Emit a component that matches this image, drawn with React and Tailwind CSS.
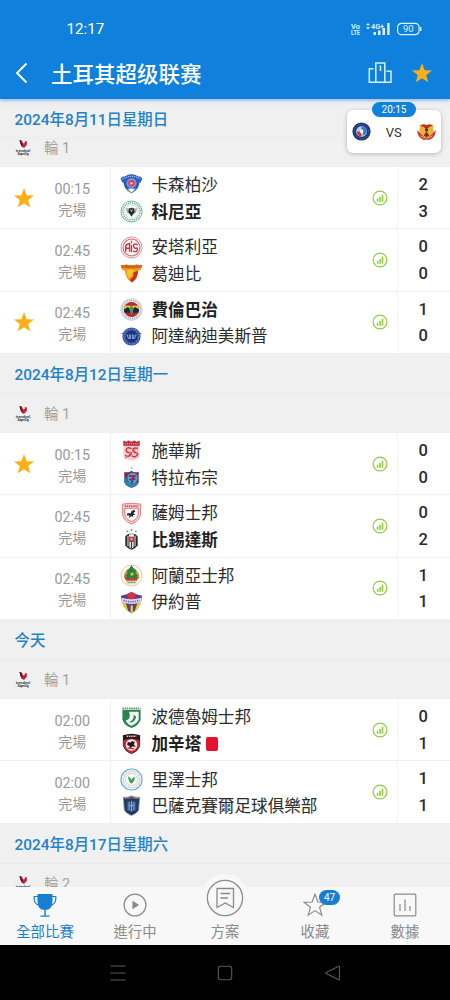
const STAR = "M12 1.200L14.900 9L23 9.300L16.600 14.300L18.800 22.200L12 17.600L5.200 22.200L7.400 14.300L1 9.300L9.100 9Z";

const crests = {
  kasimpasa: (
    <>
      <path d="M.600 6Q2 3.500 5.500 3.500Q8 1.200 12 1.200T18.500 3.500Q22 3.500 23.400 6L21.500 10H2.500Z" fill="#2b62c0" />
      <path d="M2.500 6.500Q12 .5 21.500 6.500" fill="none" stroke="#9db9ea" strokeWidth="1.100" strokeDasharray="1.300 .8" />
      <path d="M3.500 9H20.500Q20 15 16 18.500L12 21L8 18.500Q4 15 3.500 9" fill="#2a5bb8" />
      <circle cx="12" cy="10.800" r="5.200" fill="#7f98dc" />
      <circle cx="12" cy="10.800" r="3.400" fill="#d8435c" />
      <path d="M11 9.300l2.800 1.500-2.800 1.500z" fill="#fff" />
      <path d="M7.500 16.500Q12 15 16.500 16.500L12 21Z" fill="#f4f7ff" stroke="#3c6ac2" strokeWidth=".8" />
    </>
  ),
  konya: (
    <>
      <circle cx="12" cy="12" r="11" fill="#f4faf6" stroke="#6db492" strokeWidth="1" />
      <circle cx="12" cy="12" r="8.900" fill="none" stroke="#5fa684" strokeWidth="1.600" strokeDasharray="1 1" />
      <circle cx="12" cy="12" r="7" fill="#fff" stroke="#a4cdb8" strokeWidth=".5" />
      <path d="M6 8.500l4 .3L12 7.500l2 1.300 4-.3-1.500 5-2.500 1L12 18l-2-3.500-2.500-1z" fill="#a4aaa7" />
      <path d="M9.500 8.500h5l.8 4L12 17l-3.300-4.500z" fill="#222926" />
      <path d="M10.800 10l1.200 2 1.200-2" fill="none" stroke="#eee" strokeWidth=".9" />
    </>
  ),
  antalya: (
    <>
      <circle cx="12" cy="12" r="11" fill="#fff3f3" stroke="#dc9096" strokeWidth="1" />
      <circle cx="12" cy="12" r="8.800" fill="#fff" stroke="#d65a64" strokeWidth="1.100" />
      <path d="M6 16.500V10.500Q6.500 8 10 8V16.500M6 12.800H10" fill="none" stroke="#c73845" strokeWidth="1.600" />
      <path d="M18.500 9.500Q17.500 8 15.500 8.300T14.300 11T17 12.700T17.500 15.800Q15.500 17 13.800 15.300M12 5v2.500M12 9.500v7.500" fill="none" stroke="#c73845" strokeWidth="1.500" />
    </>
  ),
  goztepe: (
    <>
      <path d="M.800 3Q4 4 6.500 2.500Q12 5 17.500 2.500Q20 4 23.200 3L22 8L19 9Q18.500 17 12.500 21.500Q5.500 17 5 9L2 8Z" fill="#f09c1c" />
      <path d="M.800 3Q4 4 6.500 2.500Q12 4.500 17.500 2.500Q20 4 23.200 3L22.500 6Q12 7.500 1.500 6Z" fill="#d9601c" />
      <path d="M19 9Q18.500 17 12.500 21.500L10 18.500Q15 16 14 11Z" fill="#cb2f20" />
      <path d="M7 8.500l5-1 3 2-3 3 1 2-4 2Q6.500 13 7 8.500" fill="#f9c42a" />
    </>
  ),
  fener: (
    <>
      <circle cx="12" cy="12" r="11.300" fill="#e2e6e6" stroke="#b4bdbf" strokeWidth=".6" />
      <circle cx="12" cy="12" r="9.500" fill="none" stroke="#a4acad" strokeWidth="1.300" strokeDasharray="1 1.200" />
      <circle cx="12" cy="12" r="7.900" fill="#b7282f" />
      <path d="M4.800 8.500H19.200Q20.500 12 19.200 15.500H4.800Q3.500 12 4.800 8.500" fill="#1b2553" />
      <path d="M4.800 8H19.200L19.800 12H4.200Z" fill="#ecd42f" />
      <path d="M4.200 12L8 9.500L12 12L16 9.500L19.800 12V13.500H4.200Z" fill="#1b2553" />
      <path d="M12 7.500l2.300 3-1 5-1.300 2-1.300-2-1-5z" fill="#4d9a45" />
    </>
  ),
  adana: (
    <>
      <path d="M.500 8.500l5.500-1V11zM23.500 8.500l-5.500-1V11z" fill="#6f86c8" />
      <circle cx="12" cy="12" r="9.500" fill="#304d9c" />
      <circle cx="12" cy="12" r="7.800" fill="none" stroke="#93a7dc" strokeWidth="1.100" strokeDasharray="1 1" />
      <circle cx="12" cy="12" r="6" fill="#1b3477" />
      <path d="M6.500 10H17.500L15.500 14.500H8.500Z" fill="#7a92d8" />
      <path d="M9 9v4M12 8v8M15 9v4" stroke="#223c84" strokeWidth="1" />
    </>
  ),
  sivas: (
    <>
      <path d="M3.500 1.500l3 1 2.500-1 3 1 3-1 2.500 1 3-1V19Q18 21.500 12 22.500Q6 21.500 3.500 19Z" fill="#f4cdd2" />
      <path d="M3.500 1.500l3 1.500 2.500-1.500 3 1.500 3-1.500 2.500 1.500 3-1.500V7h-17Z" fill="#bd2737" />
      <path d="M5 5h14" stroke="#f2bcc2" strokeWidth="1.200" strokeDasharray="1.200 1" />
      <path d="M12 10Q7 8 6.500 11T10 14.500T9 18Q7 18.500 5.500 17M18.500 10Q13.500 8.500 13.500 11T17 14.500T16 18.500Q14 19 12.500 17.500" fill="none" stroke="#cf2e40" strokeWidth="1.500" />
      <path d="M5 20.500L19 8" stroke="#d8626f" strokeWidth="1" />
    </>
  ),
  trabzon: (
    <>
      <circle cx="12" cy="1.800" r="1" fill="#f0a078" />
      <path d="M4.500 6Q9 7.500 12 5Q15 7.500 19.500 6V17Q18.500 21 12 22.800Q5.500 21 4.500 17Z" fill="#86284f" />
      <path d="M4.500 9v8Q5.500 21 12 22.800Q17.500 21.500 19 18L14 15.500L8.500 17Z" fill="#2585b7" />
      <circle cx="13" cy="12.500" r="5.400" fill="#49a6cd" />
      <path d="M9.500 10.500h7M13.500 10.500Q14 15 12 18M10 13.500Q12 15.500 16 13" fill="none" stroke="#8b244c" strokeWidth="1.800" />
    </>
  ),
  samsun: (
    <>
      <path d="M2.500 2.200Q12 .5 21.500 2.200V13Q20 20 12 23Q4 20 2.500 13Z" fill="#f5cfcf" stroke="#d97b80" strokeWidth="1" />
      <path d="M5 6.500H19V13Q18 18 12 20.500Q6 18 5 13Z" fill="#fff" stroke="#d76268" strokeWidth=".9" />
      <path d="M5 4.200h14" stroke="#cf4f56" strokeWidth="1.800" strokeDasharray="1.400 .8" />
      <path d="M8 11.500l3 .5 1-2.500 3-1.500 1 2-2 1.500 2 2-2.500 0 .5 2.500-2-1.500-3 2.500 1-3-3 0z" fill="#26272a" />
    </>
  ),
  besiktas: (
    <>
      <path d="M7.500 3.500h.1M12 2h.1M16.500 3.500h.1" stroke="#444" strokeWidth="1.500" strokeLinecap="round" />
      <path d="M5.500 9Q7 6 10 6h4Q17 6 18.500 9V18Q16.500 21.500 12 22.800Q7.500 21.500 5.500 18Z" fill="#2a2a2d" />
      <path d="M8.300 8v11M15.700 8v11" stroke="#f1f1f1" strokeWidth="1" />
      <path d="M9.500 6.500h5v3h-5z" fill="#f2f2f2" />
      <path d="M9.500 9h5v5.500h-5z" fill="#d03c49" />
      <path d="M9.800 14.500h4.400v5.500L12 21.500 9.800 20z" fill="#f2f2f2" />
      <path d="M12 14.500v6.500" stroke="#333" strokeWidth="1.200" />
      <path d="M10.800 11.500h2.400" stroke="#fff" />
    </>
  ),
  alanya: (
    <>
      <circle cx="12" cy="12" r="10.900" fill="#fffaf0" stroke="#e2c8a4" strokeWidth="1" />
      <path d="M4 14Q3 7 12 3.500Q21 7 20 14L17 18H7Z" fill="#c99a52" />
      <path d="M12 1l2.500 4 2.500 2-1 2 2.500 3-2.500 3H8l-2.500-3L8 9 7 7l2.500-2z" fill="#2c8144" />
      <circle cx="12.500" cy="10.500" r="1.700" fill="#e1c63c" />
      <path d="M4.500 13l7.500 2.500 7.500-2.500-2 4.500h-11z" fill="#ad4a2c" />
      <path d="M6 17.500h12l-1 3.500H7z" fill="#eadfc0" />
      <path d="M8 19.200h8" stroke="#6b6a48" strokeWidth="1.100" strokeDasharray="1 .7" />
    </>
  ),
  eyup: (
    <>
      <path d="M1 5L7 3.500L12 1l5 2.500L23 5Q23 17 12 23.500Q1 17 1 5" fill="#5c3e8e" />
      <path d="M7 3.500L12 1l5 2.500L15 8H9z" fill="#d6333e" />
      <path d="M2 12l4 1 3 9-3-2.500Q3 16 2 12M22 12l-4 1-3 9 3-2.500Q21 16 22 12M11 15h2.500v8L12 23.500 11 23z" fill="#e7ce34" />
      <path d="M1.500 7Q12 10 22.500 7V12Q12 15 1.500 12Z" fill="#d9d5e5" />
      <path d="M3.500 9.800Q12 12.600 20.500 9.800" fill="none" stroke="#7a66a8" strokeWidth="1.600" strokeDasharray="1.400 1" />
    </>
  ),
  bodrum: (
    <>
      <path d="M2.500 4H21.500V14Q20 20 12 23Q4 20 2.500 14Z" fill="#2f8150" />
      <path d="M2.500 2.500h19" stroke="#4f9a6b" strokeWidth="1.700" strokeDasharray="1.500 .8" />
      <path d="M9.500 6H19.500v8Q18 18 12 20.500Q7 18.500 6 15Q12 14 9.500 6" fill="#f1f8f3" />
      <path d="M14 9Q15.500 14 9.500 17Q15 18.500 17 11Q16 10.500 14 9" fill="#2f8150" />
    </>
  ),
  gaziantep: (
    <>
      <path d="M3 3.500Q12 0 21 3.500V14Q19.500 20 12 23Q4.500 20 3 14Z" fill="#1f1a1d" />
      <path d="M7 4.500h10" stroke="#e7dada" strokeWidth="1.500" strokeDasharray="1.500 .8" />
      <path d="M3.500 8.500Q12 5 20.500 8.500V14Q19 19 12 22.500Q5 19 3.500 14Z" fill="#c42b3a" />
      <circle cx="12" cy="13.500" r="6" fill="#fae9e9" />
      <path d="M8 10.500l3 .5 1.500-1.500 3 1-1 2.500 2 2.500-3.500-.5-3 2.500 0-3-2.500-1z" fill="#28191c" />
      <path d="M8 16.500l7 1" stroke="#c42b3a" strokeWidth="1.300" />
    </>
  ),
  rize: (
    <>
      <circle cx="12" cy="12" r="11" fill="#eff7fa" stroke="#6fa9cc" strokeWidth="1.200" />
      <circle cx="12" cy="12" r="8.500" fill="none" stroke="#b9c8ce" strokeWidth="1.400" strokeDasharray="1 1" />
      <circle cx="12" cy="12" r="6.200" fill="#fff" stroke="#d5a9a9" strokeWidth=".6" />
      <path d="M12 16.500Q8.500 14 8.500 8.500Q11.500 10 12 12.500Q12.500 10 15.500 9Q15.500 14 12 16.500" fill="#36a357" />
    </>
  ),
  basaksehir: (
    <>
      <path d="M3.500 3.500Q8 4 12 2Q16 4 20.500 3.500L19.500 17Q17 21 12 22.500Q7 21 4.500 17Z" fill="#223a60" stroke="#8a98ae" strokeWidth=".8" />
      <path d="M5 4.800Q12 3 19 4.800" fill="none" stroke="#a8786c" strokeWidth="1" />
      <path d="M7 8h10v9l-5 3-5-3z" fill="#2f5789" />
      <path d="M9.500 8v9M12 7v11M14.500 8v9M9.500 12h5" stroke="#8fadd0" strokeWidth="1" />
      <path d="M8 18l4 2.300 4-2.300" fill="none" stroke="#16315a" strokeWidth="1.500" />
    </>
  ),
  jdt: (
    <>
      <circle cx="12" cy="12" r="11.500" fill="#1c3470" />
      <circle cx="12" cy="12" r="9" fill="none" stroke="#4a6cb0" strokeWidth="1.300" strokeDasharray="1.500 1.500" />
      <circle cx="12" cy="12" r="6.800" fill="#b8cdec" />
      <path d="M6 12h6v6.500Q7 18 6 12" fill="#c93546" />
      <path d="M12 5.500Q18.500 7 18.500 12.500L15 17.500L12 13Z" fill="#3874c4" />
      <path d="M10.500 9l4 1-1 5-3-1z" fill="#fff" />
    </>
  ),
  selangor: (
    <>
      <path d="M3.500 4Q8 2 12 3.500Q16 2 20.500 4L21 13L12 21L3 13Z" fill="#e8b33b" />
      <path d="M4 4.500Q8 2 12 4Q16 2 20 4.500L16 6L12 9L8 6Z" fill="#b92f27" />
      <path d="M.500 10Q0 19 8 22.500H16Q24 19 23.500 10L19.500 14.500L15 18.500H9L4.500 14.500Z" fill="#c53a2a" />
      <circle cx="12" cy="10" r="2" fill="#5f2420" />
      <path d="M8.500 17l3.500-5 3.500 5-3.500 2z" fill="#8d241d" />
      <path d="M4.500 17.500Q12 23 19.500 17.500" fill="none" stroke="#f0bf5b" strokeWidth="1.200" />
    </>
  ),
};

const days = [
  {
    date: "2024年8月12日星期一",
    round: "輪 1",
    matches: [
      { time: "00:15", star: true, home: ["sivas", "施華斯", 0], away: ["trabzon", "特拉布宗", 0] },
      { time: "02:45", home: ["samsun", "薩姆士邦", 0], away: ["besiktas", "比錫達斯", 2], winner: "away" },
      { time: "02:45", home: ["alanya", "阿蘭亞士邦", 1], away: ["eyup", "伊約普", 1] },
    ],
  },
  {
    date: "今天",
    round: "輪 1",
    matches: [
      { time: "02:00", home: ["bodrum", "波德魯姆士邦", 0], away: ["gaziantep", "加辛塔", 1], winner: "away", redCard: true },
      { time: "02:00", home: ["rize", "里澤士邦", 1], away: ["basaksehir", "巴薩克賽爾足球俱樂部", 1] },
    ],
  },
  { date: "2024年8月17日星期六", round: "輪 2", matches: [] },
];

const firstDay = [
  { time: "00:15", star: true, home: ["kasimpasa", "卡森柏沙", 2], away: ["konya", "科尼亞", 3], winner: "away" },
  { time: "02:45", home: ["antalya", "安塔利亞", 0], away: ["goztepe", "葛迪比", 0] },
  { time: "02:45", star: true, home: ["fener", "費倫巴治", 1], away: ["adana", "阿達納迪美斯普", 0], winner: "home" },
];

function Crest({ name, className = "size-[23px]" }) {
  return (
    <svg viewBox="0 0 24 24" className={`shrink-0 ${className}`}>
      {crests[name]}
    </svg>
  );
}

function Star({ className }) {
  return (
    <svg viewBox="0 0 24 24" className={className}>
      <path d={STAR} fill="#fdaf17" />
    </svg>
  );
}

function LeagueLogo() {
  return (
    <svg viewBox="0 0 16 18" className="h-[18px] w-4 shrink-0">
      <path d="M4.500 1l2.500.8 1.200 2.700L10 3.500l-.3-1.500L12 2.500 11.800 6 9 9 6.500 7.500z" fill="#c5283e" />
      <path d="M4.500 1l2.300.8-.6 1.500 1.300 2.500L7.500 8 5.500 5z" fill="#2b1b22" />
      <text x="8" y="13.300" textAnchor="middle" textLength="14.500" lengthAdjust="spacingAndGlyphs" fontSize="4" fontWeight="700" fill="#444">trendyol</text>
      <text x="8" y="16.300" textAnchor="middle" textLength="11" lengthAdjust="spacingAndGlyphs" fontSize="3.500" fontWeight="700" fill="#222">SüperLig</text>
    </svg>
  );
}

function DateText({ children }) {
  return <span className="pt-[3.500px] text-[15.4px] font-medium text-[#2381cb]">{children}</span>;
}

function Round({ children }) {
  return (
    <>
      <LeagueLogo />
      <span className="ml-[13px] pt-[3px] text-[14.5px] text-[#a3a3a3]">{children}</span>
    </>
  );
}

function Team({ team, bold, redCard }) {
  const [crest, name] = team;
  return (
    <div className="flex h-[26.7px] items-center">
      <Crest name={crest} />
      <span className={`ml-[9px] pt-[3px] text-[16.6px] whitespace-nowrap ${bold ? "font-bold text-[#222]" : "text-[#2c2c2c]"}`}>
        {name}
      </span>
      {redCard && <span className="ml-[5px] h-[14px] w-3 rounded-[2px] bg-[#e4122f]" />}
    </div>
  );
}

function Match({ match }) {
  const { time, star, home, away, winner, redCard } = match;
  return (
    <div className="flex h-[62.3px] border-b border-[#f0f0f0] bg-white">
      <div className="flex w-[48px] items-center justify-center">
        {star && <Star className="size-[22px]" />}
      </div>
      <div className="flex w-[62.500px] flex-col items-center border-r border-[#f1f1f1] pt-[11.500px] pr-[13px] text-[#9a9a9a]">
        <span className="h-[21px] text-[14.3px] leading-[21px]">{time}</span>
        <span className="h-[21px] text-[14px] leading-[21px]">完場</span>
      </div>
      <div className="flex flex-1 flex-col pt-[4.500px] pl-[9px]">
        <Team team={home} bold={winner === "home"} />
        <Team team={away} bold={winner === "away"} redCard={redCard} />
      </div>
      <div className="flex w-[25.500px] items-center border-r border-[#f4f4f4]">
        <svg viewBox="0 0 16 16" className="-ml-px size-4" fill="none" stroke="#8dcb3f">
          <circle cx="8" cy="8" r="6.900" strokeWidth="1.200" />
          <path d="M5.600 8.800v3M8.100 7v4.800M10.500 4.800v7" strokeWidth="1.600" />
        </svg>
      </div>
      <div className="flex w-[52px] flex-col items-center pt-[4px] pr-[1.500px] text-[16.5px] font-medium text-[#2a2a2a]">
        <span className="h-[26.7px] leading-[27px]">{home[2]}</span>
        <span className="h-[26.7px] leading-[27px]">{away[2]}</span>
      </div>
    </div>
  );
}

function StatusBar() {
  return (
    <div className="flex h-[58px] items-center pl-[66.500px] text-white">
      <span className="w-[283.500px] pt-px text-[15.2px] leading-none">12:17</span>
      <svg viewBox="0 0 72 16" className="h-4 w-[72px]" fill="#d9f2ff">
        <text x="1" y="7.600" fontSize="8" fontWeight="700" textLength="9" lengthAdjust="spacingAndGlyphs">Vo</text>
        <text x="1" y="14" fontSize="7.500" fontWeight="700" textLength="9" lengthAdjust="spacingAndGlyphs">LTE</text>
        <path d="M16 4.300l2-2.300 2 2.300zM16 6.200l2 2.300 2-2.300z" />
        <text x="21" y="7.800" fontSize="8" fontWeight="700" textLength="13" lengthAdjust="spacingAndGlyphs">4G+</text>
        <path d="M23.500 11h2.500v3h-2.500zM28 9.500h2.500V14H28zM32.500 7H35v7h-2.500zM37.200 2h2.400v12h-2.400z" />
        <rect x="47.600" y="2.300" width="21.500" height="11.400" rx="4" fill="none" stroke="#d9f2ff" strokeWidth="1.200" />
        <path d="M70 6h1.400v4H70z" />
        <text x="58.300" y="11.400" fontSize="9.500" textAnchor="middle">90</text>
      </svg>
    </div>
  );
}

function Header() {
  return (
    <header className="relative z-10 h-[99px] bg-[#0f80dc] shadow-[0_1px_4px_rgba(30,130,220,0.6)]">
      <StatusBar />
      <div className="flex h-[30px] items-center pl-[14px] text-white">
        <svg viewBox="0 0 16 22" className="h-[22px] w-4" fill="none" stroke="currentColor" strokeWidth="1.900">
          <path d="M12.500 1.500L3 11l9.500 9.500" />
        </svg>
        <h1 className="ml-[21px] flex-1 pt-[3px] font-['Roboto','Noto_Sans_CJK_SC',sans-serif] text-[21.5px] font-medium">土耳其超级联赛</h1>
        <svg viewBox="0 0 24 24" className="size-6" fill="none" stroke="#d5f0ff" strokeWidth="1.500">
          <path d="M5.500 7.800H1.300V21.300H23V10.300H18.500M7.800 21V2h9v19M11.500 5.300h1V10" />
        </svg>
        <Star className="mr-[17px] ml-[19px] size-[22px]" />
      </div>
    </header>
  );
}

function NextMatch() {
  return (
    <div className="absolute top-[110px] left-[347px] z-10 flex h-[43px] w-[93.500px] items-center justify-between rounded-[6px] bg-white px-[5px] shadow-[0_1px_4px_rgba(0,0,0,0.25)]">
      <span className="absolute -top-[8px] left-[25px] flex h-[15px] w-[44px] items-center justify-center rounded-full bg-[#1182dc] text-[10px] text-white">
        20:15
      </span>
      <Crest name="jdt" className="size-[19px]" />
      <span className="pt-[2px] text-[13px] text-[#333]">VS</span>
      <Crest name="selangor" className="size-[19px]" />
    </div>
  );
}

function NavItem({ label, active, children }) {
  return (
    <div className={`flex flex-1 flex-col items-center pt-[6px] ${active ? "text-[#167fd4]" : "text-[#8b8b8b]"}`}>
      <div className="relative h-6">{children}</div>
      <span className="mt-[6px] text-[14.4px] leading-[20px]">{label}</span>
    </div>
  );
}

function BottomNav() {
  return (
    <nav className="relative flex h-[58px] bg-[#f8f8f8]">
      <NavItem label="全部比賽" active>
        <svg viewBox="0 0 24 24" className="size-6" fill="none" stroke="currentColor" strokeWidth="1.200">
          <path d="M4.500 1h15v7q0 9-7.500 9T4.500 8zM11.300 16h1.400v7h-1.400z" fill="currentColor" stroke="none" />
          <path d="M5 3.500H1.200Q.5 11.500 6.500 12.500M19 3.500h3.800Q23.500 11.500 17.500 12.500M7.500 23.200h9" />
        </svg>
      </NavItem>
      <NavItem label="進行中">
        <svg viewBox="0 0 24 24" className="size-6" fill="none" stroke="currentColor" strokeWidth="1.200">
          <circle cx="12" cy="12" r="10.900" />
          <path d="M10 8.800l5 3.200-5 3.200z" fill="currentColor" />
        </svg>
      </NavItem>
      <NavItem label="方案">
        <div className="absolute -top-[19.500px] left-1/2 flex size-[48px] -translate-x-1/2 items-center justify-center rounded-full bg-[#f8f8f8]">
          <svg viewBox="0 0 38 38" className="size-[38px]" fill="none" stroke="currentColor" strokeWidth="1.300">
            <circle cx="19" cy="19" r="17.600" />
            <path d="M11 9.500h16.500v19L19.300 24 11 28.500zM14.500 14.500H24M14.500 19H22" />
          </svg>
        </div>
      </NavItem>
      <NavItem label="收藏">
        <svg viewBox="0 0 24 24" className="size-6" fill="none" stroke="currentColor" strokeWidth="1.200">
          <path d={STAR} />
        </svg>
        <span className="absolute -top-[3px] left-[16px] flex h-[15px] w-[21px] items-center justify-center rounded-full bg-[#167fd4] text-[10px] text-white">
          47
        </span>
      </NavItem>
      <NavItem label="數據">
        <svg viewBox="0 0 24 24" className="size-6" fill="none" stroke="currentColor" strokeWidth="1.200">
          <rect x="1.200" y="1.200" width="21.600" height="21.600" rx="1" />
          <path d="M7 11v7M12 6.500V18M17 13v5" />
        </svg>
      </NavItem>
    </nav>
  );
}

function SystemNav() {
  return (
    <div className="flex h-[55px] items-center justify-between bg-black px-[109.500px] text-[#5a5a5a]">
      <svg viewBox="0 0 16 16" className="size-4" fill="none" stroke="currentColor" strokeWidth="1.100">
        <path d="M.5 1h15M.5 8h15M.5 15h15" />
      </svg>
      <svg viewBox="0 0 16 16" className="size-4" fill="none" stroke="currentColor" strokeWidth="1.100">
        <rect x="1.300" y="1.300" width="13.400" height="13.400" rx="2.500" />
      </svg>
      <svg viewBox="0 0 16 16" className="size-4" fill="none" stroke="currentColor" strokeWidth="1.100" strokeLinejoin="round">
        <path d="M14.500 1.500v13q0 .5-.8.2L1.200 8.500q-.6-.5 0-1L13.700 1.300q.8-.3.800.2" />
      </svg>
    </div>
  );
}

export default function App() {
  return (
    <div className="relative flex h-[1000px] w-[450px] flex-col overflow-hidden bg-[#f0f0f0] font-['Roboto','Noto_Sans_CJK_TC',sans-serif] leading-none">
      <Header />
      <NextMatch />
      <main className="h-[788px] overflow-hidden">
        <div className="flex h-[40px] items-center border-b border-[#ececec] pl-[14.500px]">
          <DateText>2024年8月11日星期日</DateText>
        </div>
        <div className="flex h-[28px] items-center pb-[11px] pl-[15px]">
          <Round>輪 1</Round>
        </div>
        {firstDay.map((match, i) => (
          <Match key={i} match={match} />
        ))}
        {days.map((day) => (
          <section key={day.date}>
            <div className="flex h-[40.500px] items-center border-b border-[#e9e9e9] pl-[14.500px]">
              <DateText>{day.date}</DateText>
            </div>
            <div className="flex h-[38.700px] items-center pl-[15px]">
              <Round>{day.round}</Round>
            </div>
            {day.matches.map((match, i) => (
              <Match key={i} match={match} />
            ))}
          </section>
        ))}
      </main>
      <BottomNav />
      <SystemNav />
    </div>
  );
}
